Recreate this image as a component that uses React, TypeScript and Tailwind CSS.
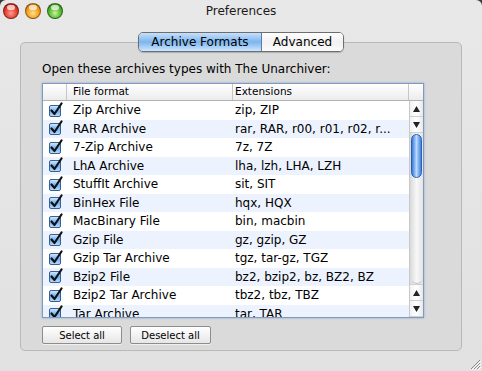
const formats: [string, string][] = [
  ["Zip Archive", "zip, ZIP"],
  ["RAR Archive", "rar, RAR, r00, r01, r02, r..."],
  ["7-Zip Archive", "7z, 7Z"],
  ["LhA Archive", "lha, lzh, LHA, LZH"],
  ["StuffIt Archive", "sit, SIT"],
  ["BinHex File", "hqx, HQX"],
  ["MacBinary File", "bin, macbin"],
  ["Gzip File", "gz, gzip, GZ"],
  ["Gzip Tar Archive", "tgz, tar-gz, TGZ"],
  ["Bzip2 File", "bz2, bzip2, bz, BZ2, BZ"],
  ["Bzip2 Tar Archive", "tbz2, tbz, TBZ"],
  ["Tar Archive", "tar, TAR"],
];

const Light = ({ className }: { className: string }) => (
  <div className={`size-[16px] rounded-full border border-black/40 relative ${className}`}>
    <div className="absolute left-[3px] top-[1px] w-[8px] h-[5px] rounded-full bg-white/70" />
  </div>
);

const Check = () => (
  <svg width="16" height="15" viewBox="0 0 16 15">
    <defs>
      <linearGradient id="cb" x1="0" y1="0" x2="0" y2="1">
        <stop offset="0" stopColor="#d9ecff" />
        <stop offset="0.5" stopColor="#6fb0f2" />
        <stop offset="1" stopColor="#b9defd" />
      </linearGradient>
    </defs>
    <rect x="1.5" y="3.5" width="11" height="11" rx="1.5" fill="url(#cb)" stroke="#3a5f92" />
    <path d="M3.5 8.5 L6.5 12 L13.5 1.5" fill="none" stroke="#111" strokeWidth="2.2" strokeLinecap="round" strokeLinejoin="round" />
  </svg>
);

const Arrow = ({ up }: { up?: boolean }) => (
  <div className="h-[16px] flex items-center justify-center bg-gradient-to-r from-[#f2f2f2] via-white to-[#e9e9e9] border-b border-[#cfcfcf]">
    <svg width="7" height="6" viewBox="0 0 7 6">
      <path d={up ? "M3.5 0 L7 6 L0 6 Z" : "M0 0 L7 0 L3.5 6 Z"} fill="#222" />
    </svg>
  </div>
);

export default function App() {
  return (
    <div className="w-[482px] h-[371px] bg-[#3b3b3b] font-['DejaVu_Sans',sans-serif] text-black">
      <div className="relative w-full h-full rounded-t-[6px] bg-gradient-to-b from-[#e8e8e8] to-[#e1e1e1] flex flex-col">
        <div className="h-[21px] grid grid-cols-[1fr_auto_1fr] items-center">
          <div className="flex items-center gap-[6px] pl-[3px]">
            <Light className="bg-[radial-gradient(circle_at_50%_65%,#ff9c8c,#e0392c_55%,#a01b12)]" />
            <Light className="bg-[radial-gradient(circle_at_50%_65%,#ffe08a,#f39a1a_55%,#b8650a)]" />
            <Light className="bg-[radial-gradient(circle_at_50%_65%,#c6f59a,#4fb329_55%,#2c7a14)]" />
          </div>
          <div className="text-[12px] text-[#1a1a1a]">Preferences</div>
          <div />
        </div>

        <div className="px-5 mt-[11px] flex flex-col">
          <div className="relative z-10 flex justify-center h-[20px] -mb-[10px]">
            <div className="flex rounded-[5px] border border-[#6e6e6e] overflow-hidden shadow-[0_1px_1px_rgba(0,0,0,0.2)]">
              <div className="w-[123px] flex items-center justify-center text-[12px] bg-gradient-to-b from-[#c6e0fb] via-[#7cb5ee] to-[#cde6ff] border-r border-[#5d7ea8]">
                Archive Formats
              </div>
              <div className="w-[81px] flex items-center justify-center text-[12px] bg-gradient-to-b from-white via-[#f1f1f1] to-[#fbfbfb]">
                Advanced
              </div>
            </div>
          </div>

          <div className="rounded-[5px] border border-[#b9b9b9] bg-[#dadada] pl-[21px] pt-[19px] pb-[6px] h-[309px]">
            <div className="text-[12px] leading-[15px]">Open these archives types with The Unarchiver:</div>

            <div className="mt-[6px] w-[382px] h-[235px] border border-[#8099be] bg-white flex flex-col overflow-hidden shadow-[0_0_2px_rgba(80,130,200,0.6)]">
              <div className="h-[17px] shrink-0 flex text-[10.5px] bg-gradient-to-b from-white to-[#ececec] border-b border-[#b2b2b2]">
                <div className="w-[24px] border-r border-[#c6c6c6]" />
                <div className="w-[166px] pl-[6px] flex items-center border-r border-[#c6c6c6]">File format</div>
                <div className="w-[176px] pl-[2px] flex items-center border-r border-[#c6c6c6]">Extensions</div>
                <div className="flex-1" />
              </div>
              <div className="flex flex-1 min-h-0">
                <div className="flex-1 overflow-hidden">
                  {formats.map(([name, ext], i) => (
                    <div
                      key={name}
                      className={`h-[18.5px] flex items-center text-[12px] ${i % 2 ? "bg-[#edf3fe]" : "bg-white"}`}
                    >
                      <div className="w-[24px] flex justify-center pl-[1px] -mt-[2px]">
                        <Check />
                      </div>
                      <div className="w-[166px] pl-[6px] whitespace-nowrap">{name}</div>
                      <div className="w-[176px] pl-[2px] whitespace-nowrap overflow-hidden">{ext}</div>
                    </div>
                  ))}
                </div>
                <div className="w-[14px] flex flex-col border-l border-[#c8c8c8] bg-gradient-to-r from-[#d9d9d9] via-[#f7f7f7] to-[#e4e4e4]">
                  <Arrow up />
                  <Arrow />
                  <div className="flex-1 flex flex-col items-center pt-[1px]">
                    <div className="w-[11px] h-[44px] rounded-full border border-[#2c5fb5] bg-gradient-to-r from-[#3b78d8] via-[#b8dbff] to-[#3f7fdc]" />
                    <div className="flex-1" />
                    <div className="w-[12px] h-[6px] rounded-b-full border-b border-[#c4c4c4]" />
                  </div>
                  <div className="border-t border-[#cfcfcf]">
                    <Arrow up />
                    <Arrow />
                  </div>
                </div>
              </div>
            </div>

            <div className="mt-[8px] flex gap-[8px]">
              <button className="w-[80px] h-[18px] rounded-[2px] border border-[#8d8d8d] bg-gradient-to-b from-white to-[#e6e6e6] text-[10px] shadow-[0_1px_0_rgba(255,255,255,0.6)]">
                Select all
              </button>
              <button className="w-[81px] h-[18px] rounded-[2px] border border-[#8d8d8d] bg-gradient-to-b from-white to-[#e6e6e6] text-[10px] shadow-[0_1px_0_rgba(255,255,255,0.6)]">
                Deselect all
              </button>
            </div>
          </div>
        </div>

        <svg className="absolute right-[1px] bottom-[1px]" width="12" height="12" viewBox="0 0 12 12">
          <path d="M11 2 L2 11 M11 5 L5 11 M11 8 L8 11" stroke="#8a8a8a" strokeWidth="1" />
          <path d="M12 3 L3 12 M12 6 L6 12 M12 9 L9 12" stroke="#ffffff" strokeWidth="1" />
        </svg>
      </div>
    </div>
  );
}
